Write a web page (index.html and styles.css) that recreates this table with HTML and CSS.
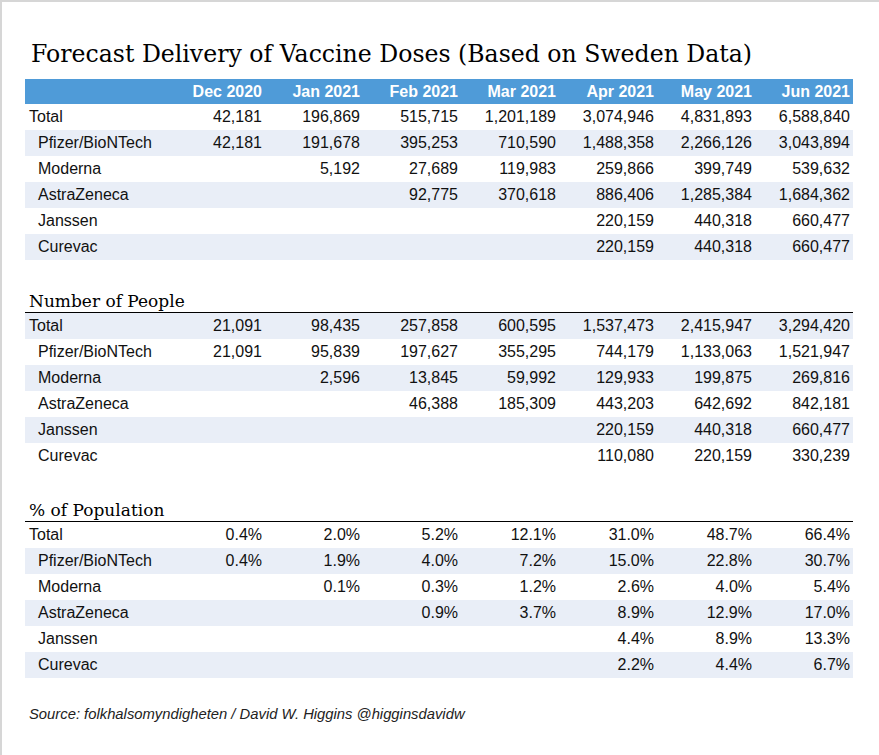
FILE: index.html
```html
<!DOCTYPE html>
<html lang="en">
<head>
<meta charset="utf-8">
<title>Forecast Delivery of Vaccine Doses</title>
<link rel="stylesheet" href="styles.css">
</head>
<body>
<div class="page">
  <h1 class="title">Forecast Delivery of Vaccine Doses (Based on Sweden Data)</h1>

  <table class="grid">
    <colgroup><col class="c-label"><col class="c-num"><col class="c-num"><col class="c-num"><col class="c-num"><col class="c-num"><col class="c-num"><col class="c-num"></colgroup>
    <thead>
      <tr class="head"><th></th><th>Dec 2020</th><th>Jan 2021</th><th>Feb 2021</th><th>Mar 2021</th><th>Apr 2021</th><th>May 2021</th><th>Jun 2021</th></tr>
    </thead>
    <tbody>
      <tr><td class="lbl">Total</td><td>42,181</td><td>196,869</td><td>515,715</td><td>1,201,189</td><td>3,074,946</td><td>4,831,893</td><td>6,588,840</td></tr>
      <tr class="alt"><td class="lbl sub">Pfizer/BioNTech</td><td>42,181</td><td>191,678</td><td>395,253</td><td>710,590</td><td>1,488,358</td><td>2,266,126</td><td>3,043,894</td></tr>
      <tr><td class="lbl sub">Moderna</td><td></td><td>5,192</td><td>27,689</td><td>119,983</td><td>259,866</td><td>399,749</td><td>539,632</td></tr>
      <tr class="alt"><td class="lbl sub">AstraZeneca</td><td></td><td></td><td>92,775</td><td>370,618</td><td>886,406</td><td>1,285,384</td><td>1,684,362</td></tr>
      <tr><td class="lbl sub">Janssen</td><td></td><td></td><td></td><td></td><td>220,159</td><td>440,318</td><td>660,477</td></tr>
      <tr class="alt"><td class="lbl sub">Curevac</td><td></td><td></td><td></td><td></td><td>220,159</td><td>440,318</td><td>660,477</td></tr>
    </tbody>
  </table>

  <h2 class="section">Number of People</h2>
  <table class="grid">
    <colgroup><col class="c-label"><col class="c-num"><col class="c-num"><col class="c-num"><col class="c-num"><col class="c-num"><col class="c-num"><col class="c-num"></colgroup>
    <tbody>
      <tr class="alt"><td class="lbl">Total</td><td>21,091</td><td>98,435</td><td>257,858</td><td>600,595</td><td>1,537,473</td><td>2,415,947</td><td>3,294,420</td></tr>
      <tr><td class="lbl sub">Pfizer/BioNTech</td><td>21,091</td><td>95,839</td><td>197,627</td><td>355,295</td><td>744,179</td><td>1,133,063</td><td>1,521,947</td></tr>
      <tr class="alt"><td class="lbl sub">Moderna</td><td></td><td>2,596</td><td>13,845</td><td>59,992</td><td>129,933</td><td>199,875</td><td>269,816</td></tr>
      <tr><td class="lbl sub">AstraZeneca</td><td></td><td></td><td>46,388</td><td>185,309</td><td>443,203</td><td>642,692</td><td>842,181</td></tr>
      <tr class="alt"><td class="lbl sub">Janssen</td><td></td><td></td><td></td><td></td><td>220,159</td><td>440,318</td><td>660,477</td></tr>
      <tr><td class="lbl sub">Curevac</td><td></td><td></td><td></td><td></td><td>110,080</td><td>220,159</td><td>330,239</td></tr>
    </tbody>
  </table>

  <h2 class="section">% of Population</h2>
  <table class="grid">
    <colgroup><col class="c-label"><col class="c-num"><col class="c-num"><col class="c-num"><col class="c-num"><col class="c-num"><col class="c-num"><col class="c-num"></colgroup>
    <tbody>
      <tr><td class="lbl">Total</td><td>0.4%</td><td>2.0%</td><td>5.2%</td><td>12.1%</td><td>31.0%</td><td>48.7%</td><td>66.4%</td></tr>
      <tr class="alt"><td class="lbl sub">Pfizer/BioNTech</td><td>0.4%</td><td>1.9%</td><td>4.0%</td><td>7.2%</td><td>15.0%</td><td>22.8%</td><td>30.7%</td></tr>
      <tr><td class="lbl sub">Moderna</td><td></td><td>0.1%</td><td>0.3%</td><td>1.2%</td><td>2.6%</td><td>4.0%</td><td>5.4%</td></tr>
      <tr class="alt"><td class="lbl sub">AstraZeneca</td><td></td><td></td><td>0.9%</td><td>3.7%</td><td>8.9%</td><td>12.9%</td><td>17.0%</td></tr>
      <tr><td class="lbl sub">Janssen</td><td></td><td></td><td></td><td></td><td>4.4%</td><td>8.9%</td><td>13.3%</td></tr>
      <tr class="alt"><td class="lbl sub">Curevac</td><td></td><td></td><td></td><td></td><td>2.2%</td><td>4.4%</td><td>6.7%</td></tr>
    </tbody>
  </table>

  <p class="source">Source: folkhalsomyndigheten / David W. Higgins @higginsdavidw</p>
</div>
</body>
</html>
```

FILE: styles.css
```css
html, body {
  margin: 0;
  padding: 0;
  background: #ffffff;
}

.page {
  box-sizing: border-box;
  min-height: 100vh;
  border-top: 2px solid #d6d6d6;
  border-left: 2px solid #d6d6d6;
  padding: 0 0 0 23px;
  font-family: "Liberation Sans", Arial, sans-serif;
  color: #111111;
}

.title {
  margin: 37px 0 10px 6px;
  font-family: "DejaVu Serif", Georgia, serif;
  font-weight: normal;
  font-size: 23.6px;
  line-height: 30px;
  color: #000000;
}

.grid {
  width: 828px;
  table-layout: fixed;
  border-collapse: collapse;
  font-size: 16px;
}

.c-label { width: 142px; }
.c-num { width: 98px; }

.grid th,
.grid td {
  padding: 0 3px 0 0;
  text-align: right;
  white-space: nowrap;
  vertical-align: middle;
}

.grid td { height: 26px; }

.head {
  background: #4f9bd8;
  color: #ffffff;
}

.head th {
  height: 25px;
  font-weight: bold;
}

.alt { background: #e9eef7; }

.grid td.lbl {
  text-align: left;
  padding-left: 4px;
}

.grid td.sub { padding-left: 13px; }

.section {
  width: 824px;
  margin: 31px 0 0 0;
  padding: 0 0 0 4px;
  border-bottom: 1px solid #000000;
  font-family: "DejaVu Serif", Georgia, serif;
  font-weight: normal;
  font-size: 17px;
  line-height: 21px;
  color: #000000;
}

.source {
  margin: 28px 0 0 4px;
  font-size: 14.8px;
  line-height: 16px;
  font-style: italic;
  color: #222222;
}
```
